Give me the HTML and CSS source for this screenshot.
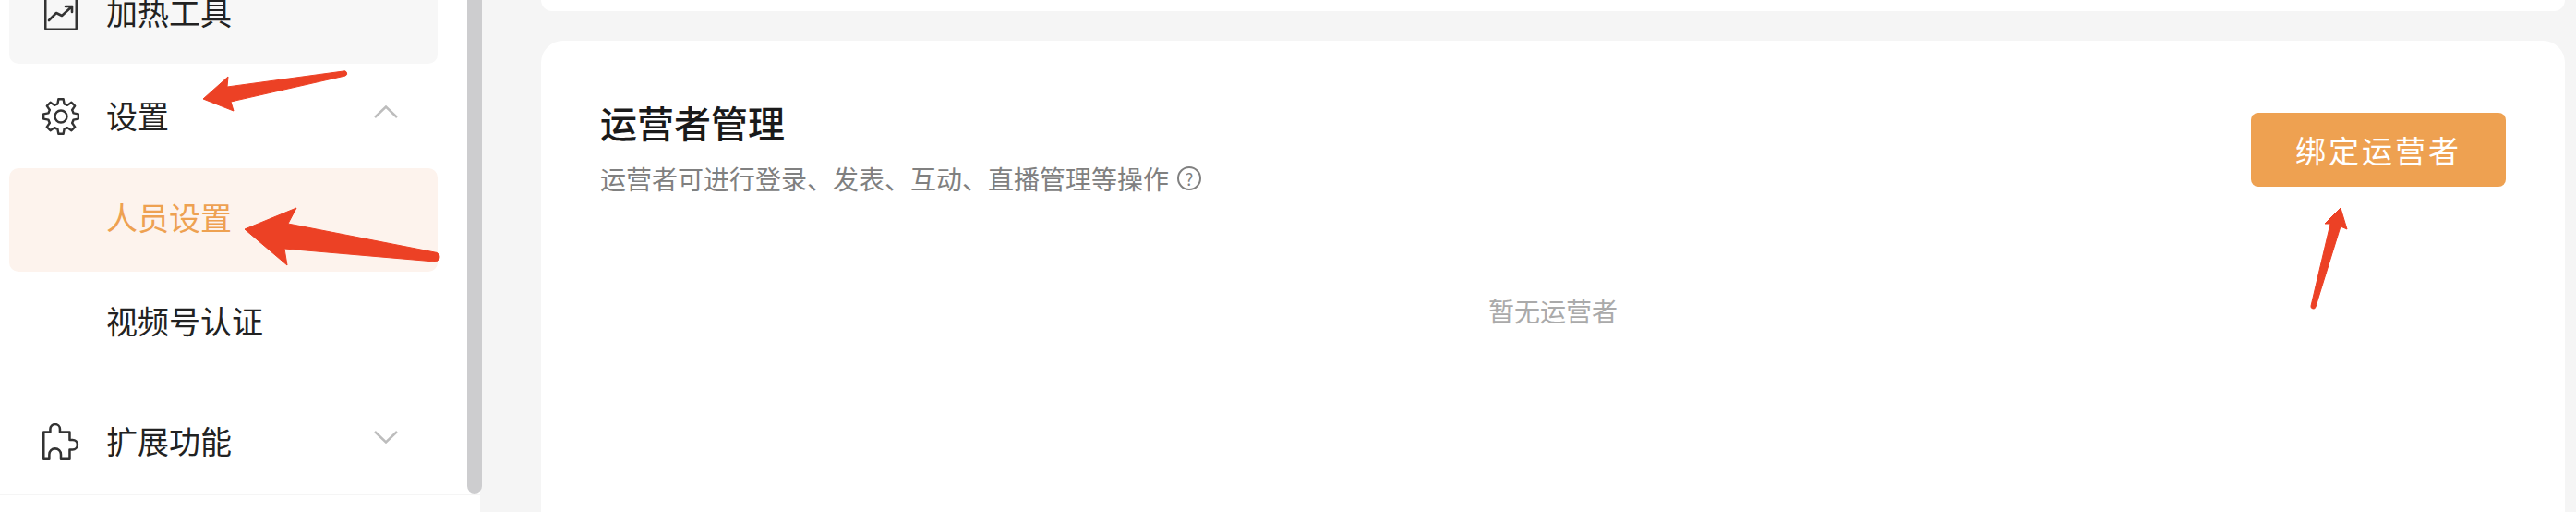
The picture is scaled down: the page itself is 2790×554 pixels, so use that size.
FILE: index.html
```html
<!DOCTYPE html>
<html lang="zh-CN">
<head>
    <meta charset="UTF-8">
    <meta name="viewport" content="width=device-width, initial-scale=1.0">
    <title>人员设置</title>
    <link rel="stylesheet" href="styles.css">
</head>
<body>
    <div class="page">
        <aside class="sidebar">
            <div class="sidebar-main">
                <nav class="menu">
                    <div class="menu-item menu-item-hot">
                        <svg class="menu-icon icon-trend" viewBox="0 0 36 40">
                            <rect x="1.2" y="1.2" width="33.6" height="37.6" rx="1.5"/>
                            <path d="M5 29 13 21 19 24 30 14M23 14H30V20"/>
                        </svg>
                        <span class="menu-label">加热工具</span>
                    </div>
                    <div class="menu-item menu-item-open">
                        <svg class="menu-icon" viewBox="0 0 40 40">
                            <path d="M16.38 6.48 17.36 1.18H22.64L23.62 6.48A14 14 0 0 1 27 7.88L31.43 4.83 35.17 8.57 32.12 13A14 14 0 0 1 33.52 16.38L38.82 17.36V22.64L33.52 23.62A14 14 0 0 1 32.12 27L35.17 31.43 31.43 35.17 27 32.12A14 14 0 0 1 23.62 33.52L22.64 38.82H17.36L16.38 33.52A14 14 0 0 1 13 32.12L8.57 35.17 4.83 31.43 7.88 27A14 14 0 0 1 6.48 23.62L1.18 22.64V17.36L6.48 16.38A14 14 0 0 1 7.88 13L4.83 8.57 8.57 4.83 13 7.88A14 14 0 0 1 16.38 6.48Z"/>
                            <circle cx="20" cy="20" r="6.5"/>
                        </svg>
                        <span class="menu-label">设置</span>
                        <svg class="chevron" viewBox="0 0 26 14"><path d="M1 13 13 1.5 25 13"/></svg>
                    </div>
                    <div class="submenu-item submenu-item-active">人员设置</div>
                    <div class="submenu-item">视频号认证</div>
                    <div class="menu-item menu-item-ext">
                        <svg class="menu-icon" viewBox="0 0 38 38">
                            <path d="M1.2 9H8V6A5 5 0 0 1 18 6V9H28V17H31A5 5 0 0 1 31 27H28V36.8H19V32A6 6 0 0 0 7 32V36.8H1.2Z"/>
                        </svg>
                        <span class="menu-label">扩展功能</span>
                        <svg class="chevron" viewBox="0 0 26 14"><path d="M1 1 13 12.5 25 1"/></svg>
                    </div>
                </nav>
                <div class="scrollbar"></div>
            </div>
            <div class="sidebar-footer"></div>
        </aside>

        <main class="content">
            <div class="card card-top"></div>
            <section class="card card-operators">
                <div class="card-header">
                    <div>
                        <h2>运营者管理</h2>
                        <p class="card-desc">
                            运营者可进行登录、发表、互动、直播管理等操作
                            <span class="help-icon">?</span>
                        </p>
                    </div>
                    <button class="btn-bind">绑定运营者</button>
                </div>
                <div class="empty-text">暂无运营者</div>
            </section>
        </main>
    </div>

    <!-- red arrows drawn on top of the screenshot -->
    <svg class="arrows" viewBox="0 0 2790 554">
        <path d="M220 107 247 83 246 94 372 77A2.5 2.5 0 0 1 374 82L250 110 253 120Z"/>
        <path d="M265 248 321 225 312 242 471 273A5 5 0 0 1 471 283L308 269 311 287Z"/>
        <path d="M2535 225 2542 248 2535 245 2508 332A2.5 2.5 0 0 1 2503 331L2524 242 2518 242Z"/>
    </svg>
</body>
</html>
```

FILE: styles.css
```css
:root {
    --primary-color: #eea151;
    --text-color: #222222;
    --background: #f5f5f5;
}

* {
    margin: 0;
    padding: 0;
    box-sizing: border-box;
}

body {
    font-family: "Noto Sans CJK SC", "Noto Sans", sans-serif;
    background: var(--background);
    color: var(--text-color);
    overflow: hidden;
}

.page {
    display: flex;
    height: 554px;
    overflow: hidden;
}

/* sidebar */
.sidebar {
    width: 520px;
    flex-shrink: 0;
    background: #ffffff;
    display: flex;
    flex-direction: column;
}

.sidebar-main {
    display: flex;
    height: 534px;
    width: 522px;
}

.menu {
    width: 506px;
    padding: 0 32px 0 10px;
}

.scrollbar {
    width: 16px;
    background: #cdcdcf;
    border-radius: 0 0 8px 8px;
}

.sidebar-footer {
    flex: 1;
    border-top: 2px solid var(--background);
}

.menu-item {
    display: flex;
    align-items: center;
    gap: 29px;
    height: 113px;
    padding: 0 43px 0 36px;
    font-size: 34px;
}

.menu-label {
    margin-top: -2px;
}

.menu-item-hot {
    height: 112px;
    margin-top: -43px;
    background: #f7f7f7;
    border-radius: 0 0 10px 10px;
}

.menu-item-ext {
    margin-top: 15px;
}

.menu-icon {
    width: 40px;
    height: 40px;
    flex-shrink: 0;
    fill: none;
    stroke: #333333;
    stroke-width: 2.4;
    stroke-linejoin: round;
    stroke-linecap: round;
}

.icon-trend {
    width: 36px;
    margin: 0 2px;
    stroke-width: 2.6;
}

.chevron {
    width: 26px;
    height: 14px;
    margin: -10px 0 0 auto;
    fill: none;
    stroke: #bdbdbd;
    stroke-width: 2.5;
}

.submenu-item {
    height: 112px;
    padding-left: 105px;
    font-size: 34px;
    line-height: 106px;
    border-radius: 10px;
}

.submenu-item-active {
    background: #fdf3ed;
    color: var(--primary-color);
}

/* main content */
.content {
    flex: 1;
    padding: 0 12px 0 66px;
}

.card {
    background: #ffffff;
}

.card-top {
    height: 12px;
    margin-bottom: 32px;
    border-radius: 0 0 24px 24px;
}

.card-operators {
    height: 560px;
    padding: 73px 64px 0 64px;
    border-radius: 24px 24px 0 0;
}

.card-header {
    display: flex;
    justify-content: space-between;
    align-items: flex-start;
}

.card-header h2 {
    font-size: 40px;
    font-weight: 500;
    line-height: 30px;
    color: #1a1a1a;
}

.card-desc {
    display: flex;
    align-items: center;
    gap: 9px;
    margin-top: 31px;
    font-size: 28px;
    line-height: 30px;
    color: #808080;
}

.help-icon {
    width: 26px;
    height: 26px;
    border: 2px solid #808080;
    border-radius: 50%;
    font-size: 18px;
    line-height: 22px;
    text-align: center;
}

.btn-bind {
    width: 276px;
    height: 80px;
    margin-top: 5px;
    background: var(--primary-color);
    color: #ffffff;
    border: none;
    border-radius: 8px;
    font-family: inherit;
    font-size: 33px;
    letter-spacing: 3px;
}

.empty-text {
    margin-top: 108px;
    text-align: center;
    font-size: 28px;
    line-height: 40px;
    color: #aaaaaa;
}

/* annotations */
.arrows {
    position: absolute;
    top: 0;
    left: 0;
    width: 2790px;
    height: 554px;
    pointer-events: none;
    fill: #ec4125;
    stroke: #ec4125;
    stroke-width: 1;
    stroke-linejoin: round;
}
```
